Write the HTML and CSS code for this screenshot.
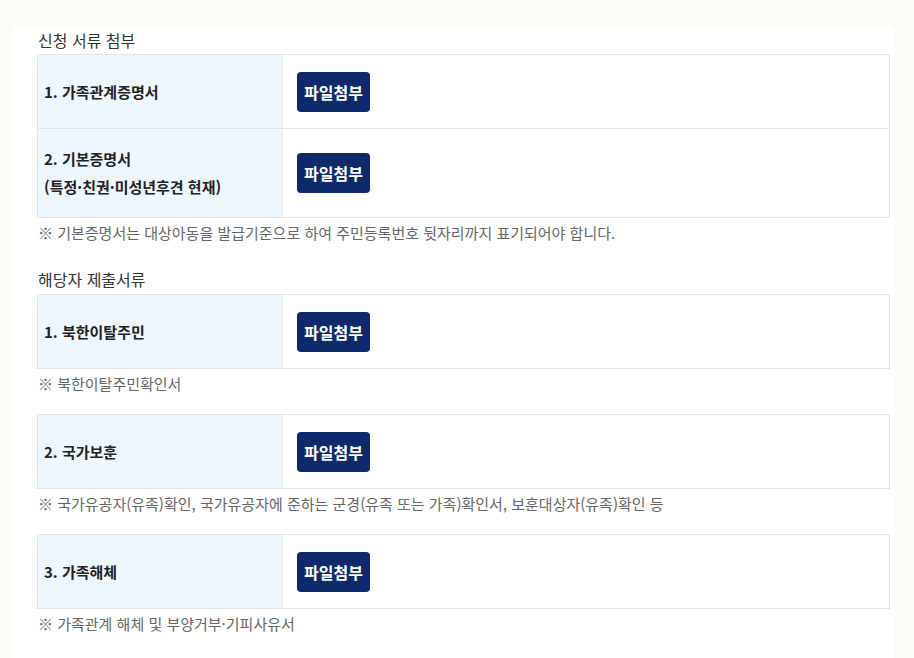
FILE: index.html
```html
<!DOCTYPE html>
<html lang="ko">
<head>
    <meta charset="UTF-8">
    <meta name="viewport" content="width=device-width, initial-scale=1.0">
    <title>서류 첨부</title>
    <link rel="stylesheet" href="styles.css">
</head>
<body>
    <div class="panel">
        <h2 class="sect-title">신청 서류 첨부</h2>
        <div class="doc-table">
            <div class="doc-row">
                <div class="doc-label">1. 가족관계증명서</div>
                <div class="doc-field"><button type="button" class="btn-file">파일첨부</button></div>
            </div>
            <div class="doc-row">
                <div class="doc-label">2. 기본증명서<br>(특정·친권·미성년후견 현재)</div>
                <div class="doc-field"><button type="button" class="btn-file">파일첨부</button></div>
            </div>
        </div>
        <p class="note">※ 기본증명서는 대상아동을 발급기준으로 하여 주민등록번호 뒷자리까지 표기되어야 합니다.</p>

        <h2 class="sect-title sect-gap">해당자 제출서류</h2>
        <div class="doc-table">
            <div class="doc-row">
                <div class="doc-label">1. 북한이탈주민</div>
                <div class="doc-field"><button type="button" class="btn-file">파일첨부</button></div>
            </div>
        </div>
        <p class="note">※ 북한이탈주민확인서</p>

        <div class="doc-table item-gap">
            <div class="doc-row">
                <div class="doc-label">2. 국가보훈</div>
                <div class="doc-field"><button type="button" class="btn-file">파일첨부</button></div>
            </div>
        </div>
        <p class="note">※ 국가유공자(유족)확인, 국가유공자에 준하는 군경(유족 또는 가족)확인서, 보훈대상자(유족)확인 등</p>

        <div class="doc-table item-gap">
            <div class="doc-row">
                <div class="doc-label">3. 가족해체</div>
                <div class="doc-field"><button type="button" class="btn-file">파일첨부</button></div>
            </div>
        </div>
        <p class="note">※ 가족관계 해체 및 부양거부·기피사유서</p>
    </div>
</body>
</html>
```

FILE: styles.css
```css
body {
    font-family: "Noto Sans CJK KR", "Noto Sans", sans-serif;
    background-color: #fdfbf5;
    color: #222;
    margin: 0;
    padding: 0;
}
.panel {
    background-color: #fff;
    width: 853px;
    min-height: 631px;
    margin: 27px 0 0 12px;
    padding: 2px 4px 0 25px;
}
.sect-title {
    font-size: 16px;
    font-weight: normal;
    line-height: 22px;
    color: #333;
    margin: 0 0 3px 1px;
}
.sect-gap {
    margin-top: 25px;
    margin-bottom: 4px;
}
.doc-table {
    border: 1px solid #e3e3e3;
}
.item-gap {
    margin-top: 20px;
}
.doc-row {
    display: grid;
    grid-template-columns: 245px 1fr;
    min-height: 73px;
}
.doc-row + .doc-row {
    border-top: 1px solid #e3e3e3;
}
.doc-label {
    background-color: #eff7fe;
    border-right: 1px solid #ececec;
    padding: 16px 6px;
    display: flex;
    align-items: center;
    font-size: 15px;
    font-weight: bold;
    line-height: 28px;
    color: #222;
}
.doc-field {
    display: flex;
    align-items: center;
    padding: 16px 14px;
}
.btn-file {
    font-family: inherit;
    background-color: #0f2a6b;
    color: #fff;
    border: none;
    border-radius: 4px;
    width: 73px;
    height: 40px;
    font-size: 16px;
    font-weight: bold;
    cursor: pointer;
    padding: 0;
}
.note {
    margin: 5px 0 0 1px;
    font-size: 15px;
    line-height: 20px;
    color: #666;
}
```
